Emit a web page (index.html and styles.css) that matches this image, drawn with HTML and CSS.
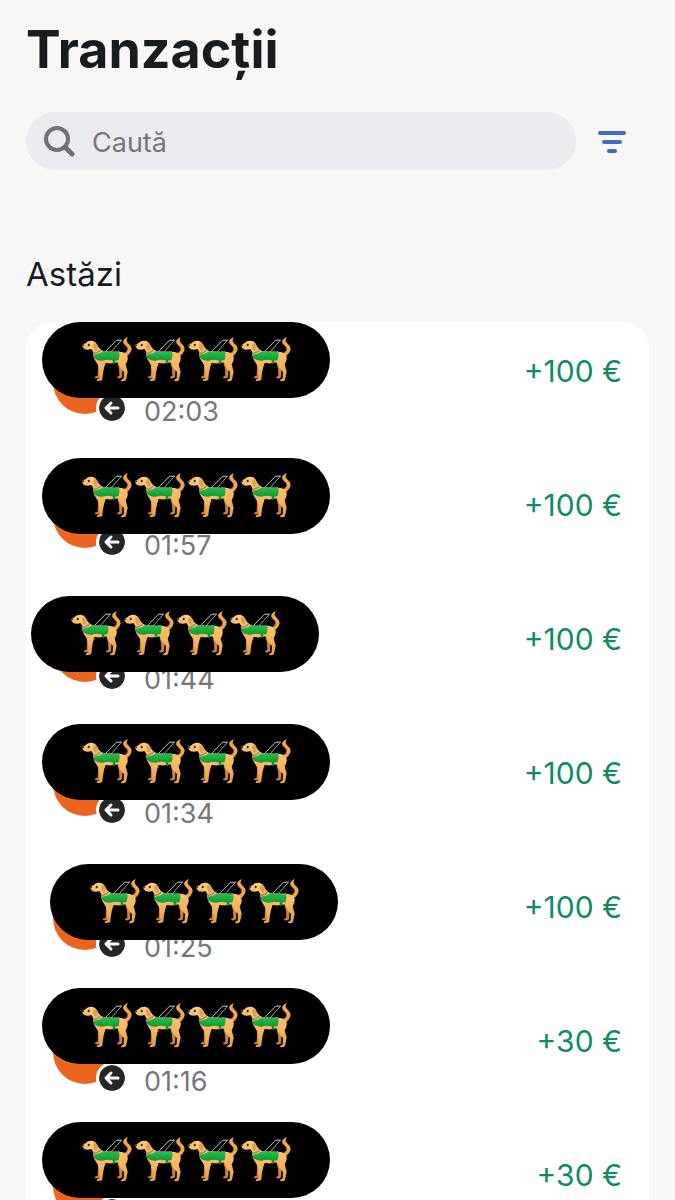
FILE: index.html
```html
<!DOCTYPE html>
<html lang="ro">
<head>
    <meta charset="UTF-8">
    <meta name="viewport" content="width=device-width, initial-scale=1.0">
    <title>Tranzacții</title>
    <link rel="stylesheet" href="styles.css">
</head>
<body>
    <!-- Shared icons -->
    <svg class="sprite" aria-hidden="true">
        <defs>
            <linearGradient id="fur" x1="0" y1="0" x2="0" y2="1">
                <stop offset="0" stop-color="#fccb80"/>
                <stop offset="0.6" stop-color="#f6b65f"/>
                <stop offset="1" stop-color="#e59c48"/>
            </linearGradient>
            <linearGradient id="vest" x1="0" y1="0" x2="0" y2="1">
                <stop offset="0" stop-color="#2fbd50"/>
                <stop offset="0.5" stop-color="#18a83c"/>
                <stop offset="1" stop-color="#08892b"/>
            </linearGradient>
        </defs>
        <symbol id="dog" viewBox="15 18 159 144">
            <path fill="#c98040" d="M69 92 L86 94 L80 116 L75 142 Q70 146 60 144 L60 140 L68 137 L69 117 Z"/>
            <path fill="#c98040" d="M126 94 L147 93 L143 115 L141 142 Q136 147 126 144 L127 140 L133 137 L132 116 Z"/>
            <path fill="#f0a650" d="M146 70 Q160 64 158 55 Q156 49 149 44 Q140 36 148 28 Q152 23 159 21 Q154 28 155 33 Q157 38 164 44 Q173 53 168 64 Q164 74 154 80 Z"/>
            <path fill="none" stroke="#bd6c2d" stroke-width="2" stroke-linecap="round" d="M152 70 Q161 62 158 54 Q154 47 149 43"/>
            <path fill="url(#fur)" d="M22 46 Q23 42 32 40 Q37 31 50 32 Q63 33 68 47 Q73 58 86 64 L132 65 Q150 65 157 77 Q161 90 152 103 L158 125 L153 150 Q149 155 138 153 L139 149 L146 145 L147 126 Q133 114 129 97 Q110 102 92 99 Q84 119 82 149 Q76 155 65 152 L66 148 L73 145 L72 119 Q70 103 62 94 Q53 82 55 66 L49 57 Q40 61 29 58 Q21 53 22 46 Z"/>
            <path fill="#e3a04e" d="M56 39 Q66 39 69 50 L67 61 Q60 66 56 57 Q52 48 56 39 Z"/>
            <path fill="none" stroke="#a58c68" stroke-width="5" d="M55 70 Q68 70 76 60"/>
            <path fill="url(#vest)" d="M56 74 Q71 74 83 64 Q108 68 132 63 Q136 77 131 89 Q127 92 121 91 L120 101 L114 101 L113 91 Q95 87 83 92 Q67 93 57 83 Z"/>
            <path fill="none" stroke="#9aa0a8" stroke-width="3" stroke-linejoin="round" d="M91 65 L124 31 L140 30 L108 66"/>
            <path fill="none" stroke="#e8ebef" stroke-width="1" d="M94 62 L125 31 L139 31"/>
            <ellipse cx="25" cy="46" rx="3" ry="3" fill="#54301d"/>
            <ellipse cx="41" cy="45" rx="3" ry="4" fill="#2b1810"/>
            <path fill="none" stroke="#c27a3a" stroke-width="1" d="M29 53 Q36 54 39 51"/>
        </symbol>
        <symbol id="arrow" viewBox="0 0 26 26">
            <circle cx="13" cy="13" r="13" fill="#252628"/>
            <path fill="none" stroke="#fff" stroke-width="3" stroke-linecap="round" stroke-linejoin="round" d="M19 13 H8 M12 8 L7 13 L12 18"/>
        </symbol>
    </svg>

    <main class="page">
        <h1>Tranzacții</h1>

        <form class="search-row">
            <label class="search">
                <svg class="search-icon" viewBox="0 0 32 32" aria-hidden="true">
                    <circle cx="13" cy="14" r="11" fill="none" stroke="#717176" stroke-width="4"/>
                    <path d="M21 22 L28 29" stroke="#717176" stroke-width="5" stroke-linecap="round"/>
                </svg>
                <input type="search" placeholder="Caută" aria-label="Caută">
            </label>
            <button type="button" class="filter" aria-label="Filtre">
                <svg viewBox="0 0 30 24" aria-hidden="true">
                    <path d="M3 4 H27 M7 13 H23 M12 22 H18" stroke="#446bc0" stroke-width="4" stroke-linecap="round"/>
                </svg>
            </button>
        </form>

        <h2>Astăzi</h2>

        <ul class="list">
            <li class="item">
                <span class="avatar"><svg class="badge"><use href="#arrow"/></svg></span>
                <time>02:03</time>
                <span class="amount">+100 €</span>
                <span class="cover">
                    <svg><use href="#dog"/></svg><svg><use href="#dog"/></svg><svg><use href="#dog"/></svg><svg><use href="#dog"/></svg>
                </span>
            </li>
            <li class="item">
                <span class="avatar"><svg class="badge"><use href="#arrow"/></svg></span>
                <time>01:57</time>
                <span class="amount">+100 €</span>
                <span class="cover low">
                    <svg><use href="#dog"/></svg><svg><use href="#dog"/></svg><svg><use href="#dog"/></svg><svg><use href="#dog"/></svg>
                </span>
            </li>
            <li class="item">
                <span class="avatar"><svg class="badge"><use href="#arrow"/></svg></span>
                <time>01:44</time>
                <span class="amount">+100 €</span>
                <span class="cover lower left">
                    <svg><use href="#dog"/></svg><svg><use href="#dog"/></svg><svg><use href="#dog"/></svg><svg><use href="#dog"/></svg>
                </span>
            </li>
            <li class="item">
                <span class="avatar"><svg class="badge"><use href="#arrow"/></svg></span>
                <time>01:34</time>
                <span class="amount">+100 €</span>
                <span class="cover">
                    <svg><use href="#dog"/></svg><svg><use href="#dog"/></svg><svg><use href="#dog"/></svg><svg><use href="#dog"/></svg>
                </span>
            </li>
            <li class="item">
                <span class="avatar"><svg class="badge"><use href="#arrow"/></svg></span>
                <time>01:25</time>
                <span class="amount">+100 €</span>
                <span class="cover lower right">
                    <svg><use href="#dog"/></svg><svg><use href="#dog"/></svg><svg><use href="#dog"/></svg><svg><use href="#dog"/></svg>
                </span>
            </li>
            <li class="item">
                <span class="avatar"><svg class="badge"><use href="#arrow"/></svg></span>
                <time>01:16</time>
                <span class="amount">+30 €</span>
                <span class="cover high">
                    <svg><use href="#dog"/></svg><svg><use href="#dog"/></svg><svg><use href="#dog"/></svg><svg><use href="#dog"/></svg>
                </span>
            </li>
            <li class="item">
                <span class="avatar"><svg class="badge"><use href="#arrow"/></svg></span>
                <span class="amount">+30 €</span>
                <span class="cover high">
                    <svg><use href="#dog"/></svg><svg><use href="#dog"/></svg><svg><use href="#dog"/></svg><svg><use href="#dog"/></svg>
                </span>
            </li>
        </ul>
    </main>
</body>
</html>
```
FILE: styles.css
```css
* {
    box-sizing: border-box;
}
body {
    margin: 0;
    height: 100vh;
    overflow: hidden;
    background-color: #f7f7f7;
    color: #191c1f;
    font-family: Inter, "Liberation Sans", sans-serif;
}
.sprite {
    position: absolute;
    width: 0;
    height: 0;
}
.page {
    padding: 18px 26px 0;
}
h1 {
    margin: 0;
    font-size: 52px;
    line-height: 64px;
    font-weight: 700;
}
.search-row {
    display: flex;
    align-items: center;
    gap: 21px;
    margin: 30px 22px 0 0;
}
.search {
    flex: 1;
    display: flex;
    align-items: center;
    gap: 16px;
    height: 58px;
    padding: 0 18px;
    border-radius: 29px;
    background-color: #ebebf0;
}
.search-icon {
    width: 32px;
    height: 32px;
    flex-shrink: 0;
}
.search input {
    flex: 1;
    min-width: 0;
    padding: 3px 0 0;
    border: none;
    outline: none;
    background: transparent;
    font-family: inherit;
    font-size: 27px;
    line-height: 36px;
    color: #191c1f;
}
.search input::placeholder {
    color: #77777b;
    opacity: 1;
}
.filter {
    display: flex;
    padding: 0;
    border: none;
    background: none;
    cursor: pointer;
}
.filter svg {
    width: 30px;
    height: 24px;
}
h2 {
    margin: 84px 0 0;
    font-size: 33px;
    line-height: 40px;
    font-weight: 400;
}

/* Transactions */
.list {
    margin: 28px 0 0;
    padding: 0;
    list-style: none;
    background-color: #fff;
    border-radius: 26px;
}
.item {
    position: relative;
    display: flex;
    align-items: flex-start;
    height: 134px;
    padding: 28px 27px 0;
}
.avatar {
    position: relative;
    flex-shrink: 0;
    width: 64px;
    height: 64px;
    border-radius: 50%;
    background-color: #ec651f;
}
.badge {
    position: absolute;
    right: -11px;
    bottom: -10px;
    width: 32px;
    height: 32px;
    padding: 3px;
    border-radius: 50%;
    background-color: #fff;
}
time {
    margin: 44px 0 0 27px;
    font-size: 27px;
    line-height: 36px;
    color: #77777b;
}
.amount {
    margin-left: auto;
    font-size: 30px;
    line-height: 42px;
    color: #128a66;
}

/* Black pill over the sender's name */
.cover {
    position: absolute;
    top: 0;
    left: 16px;
    display: flex;
    align-items: center;
    justify-content: center;
    width: 288px;
    height: 76px;
    border-radius: 38px;
    background-color: #000;
}
.cover svg {
    width: 53px;
    height: 48px;
}
.cover.low {
    top: 2px;
}
.cover.lower {
    top: 6px;
}
.cover.high {
    top: -4px;
}
.cover.left {
    left: 5px;
}
.cover.right {
    left: 24px;
}
```
